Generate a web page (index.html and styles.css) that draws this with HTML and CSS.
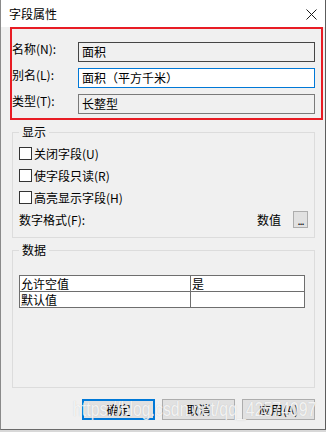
FILE: index.html
```html
<!DOCTYPE html>
<html lang="zh-CN">
<head>
<meta charset="utf-8">
<title>字段属性</title>
<link rel="stylesheet" href="styles.css">
</head>
<body>
<div class="window">
  <div class="titlebar">
    <span class="title">字段属性</span>
    <svg class="close" width="11" height="11" viewBox="0 0 11 11"><path d="M0.5 0.5 L10.5 10.5 M10.5 0.5 L0.5 10.5" stroke="#1a1a1a" stroke-width="1" fill="none"/></svg>
  </div>
  <div class="content">
    <div class="annot">
      <div class="row"><span class="lbl">名称(N):</span><div class="field ro dark">面积</div></div>
      <div class="row"><span class="lbl">别名(L):</span><div class="field focus">面积（平方千米）</div></div>
      <div class="row"><span class="lbl">类型(T):</span><div class="field ro">长整型</div></div>
    </div>
    <fieldset class="group show">
      <legend>显示</legend>
      <div class="crow"><span class="cb"></span><span>关闭字段(U)</span></div>
      <div class="crow"><span class="cb"></span><span>使字段只读(R)</span></div>
      <div class="crow"><span class="cb"></span><span>高亮显示字段(H)</span></div>
      <div class="crow fmt"><span>数字格式(F):</span><span class="grow"></span><span class="val">数值</span><span class="dots">...</span></div>
    </fieldset>
    <fieldset class="group data">
      <legend>数据</legend>
      <table class="grid">
        <tr><td class="c1">允许空值</td><td>是</td></tr>
        <tr><td class="c1">默认值</td><td></td></tr>
      </table>
    </fieldset>
    <div class="buttons">
      <button class="btn default">确定</button>
      <button class="btn">取消</button>
      <button class="btn">应用(A)</button>
    </div>
  </div>
  <div class="watermark">https://blog.csdn.net/qq_42574097</div>
</div>
</body>
</html>
```
FILE: styles.css
```css
html, body {
  margin: 0;
  padding: 0;
  background: #d8d8d8;
}
body {
  font-family: "Noto Sans CJK SC", "Noto Sans", sans-serif;
  font-size: 12px;
  color: #000;
}
.window {
  position: relative;
  width: 326px;
  height: 430px;
  box-sizing: border-box;
  background: #f0f0f0;
  border-left: 1px solid #8a8a8a;
  border-right: 1px solid #5c5c5c;
  border-bottom: 1px solid #6a6a6a;
  overflow: hidden;
}
.titlebar {
  height: 27px;
  background: #fff;
  display: flex;
  align-items: center;
  justify-content: space-between;
  padding: 0 8px 0 8px;
}
.title {
  font-size: 12px;
  line-height: 14px;
  margin-top: 1px;
}
.close {
  display: block;
  margin-top: 2px;
}
.annot {
  margin: 0 2px 0 9px;
  border: 2px solid #e81c24;
  padding: 13px 6px 4px 0;
  display: flex;
  flex-direction: column;
  gap: 6px;
}
.row {
  display: flex;
  height: 20px;
}
.lbl {
  width: 66px;
  line-height: 14px;
  flex: none;
}
.field {
  flex: 1;
  box-sizing: border-box;
  height: 20px;
  line-height: 18px;
  padding-left: 3px;
  border: 1px solid #7a7a7a;
  background: #f0f0f0;
}
.field.dark { border-color: #454545; }
.field.focus {
  border-color: #0078d7;
  background: #fff;
}
.group {
  margin: 5px 10px 0 11px;
  width: 303px;
  box-sizing: border-box;
  border: 1px solid #dcdcdc;
  padding: 3px 6px 7px 6px;
  min-inline-size: 0;
}
.group legend {
  padding: 0 3px;
  line-height: 14px;
  font-size: 12px;
}
.crow {
  display: flex;
  align-items: center;
  height: 22px;
}
.cb {
  width: 13px;
  height: 13px;
  box-sizing: border-box;
  border: 1px solid #333;
  background: #fff;
  margin-right: 2px;
}
.grow { flex: 1; }
.val { margin-right: 12px; }
.dots {
  width: 15px;
  height: 17px;
  box-sizing: border-box;
  border: 1px solid #adadad;
  background: #e1e1e1;
  font-size: 11px;
  line-height: 17px;
  text-align: center;
  letter-spacing: -1px;
}
.group.data {
  padding: 18px 6px 79px 6px;
}
.grid {
  border-collapse: collapse;
  width: 286px;
  background: #fff;
  border: 1px solid #6e6e6e;
}
.grid td {
  border: 1px solid #6e6e6e;
  height: 15px;
  line-height: 15px;
  padding: 0 0 0 1px;
  font-size: 12px;
}
.grid td.c1 { width: 169px; }
.buttons {
  display: flex;
  justify-content: flex-end;
  gap: 7px;
  margin: 11px 10px 0 0;
}
.btn {
  width: 73px;
  height: 21px;
  box-sizing: border-box;
  border: 1px solid #adadad;
  background: #e1e1e1;
  font-family: "Noto Sans CJK SC", "Noto Sans", sans-serif;
  font-size: 12px;
  line-height: 17px;
  padding: 0;
  color: #000;
}
.btn.default {
  border: 2px solid #0078d7;
}
.watermark {
  position: absolute;
  left: 72px;
  top: 397px;
  font-family: "Liberation Sans", Arial, sans-serif;
  font-size: 21px;
  line-height: 24px;
  color: rgba(255, 255, 255, 0.82);
  text-shadow: 0 0 1px rgba(120, 120, 120, 0.35);
  transform: scaleX(0.755);
  transform-origin: 0 0;
  white-space: nowrap;
  pointer-events: none;
}
```
